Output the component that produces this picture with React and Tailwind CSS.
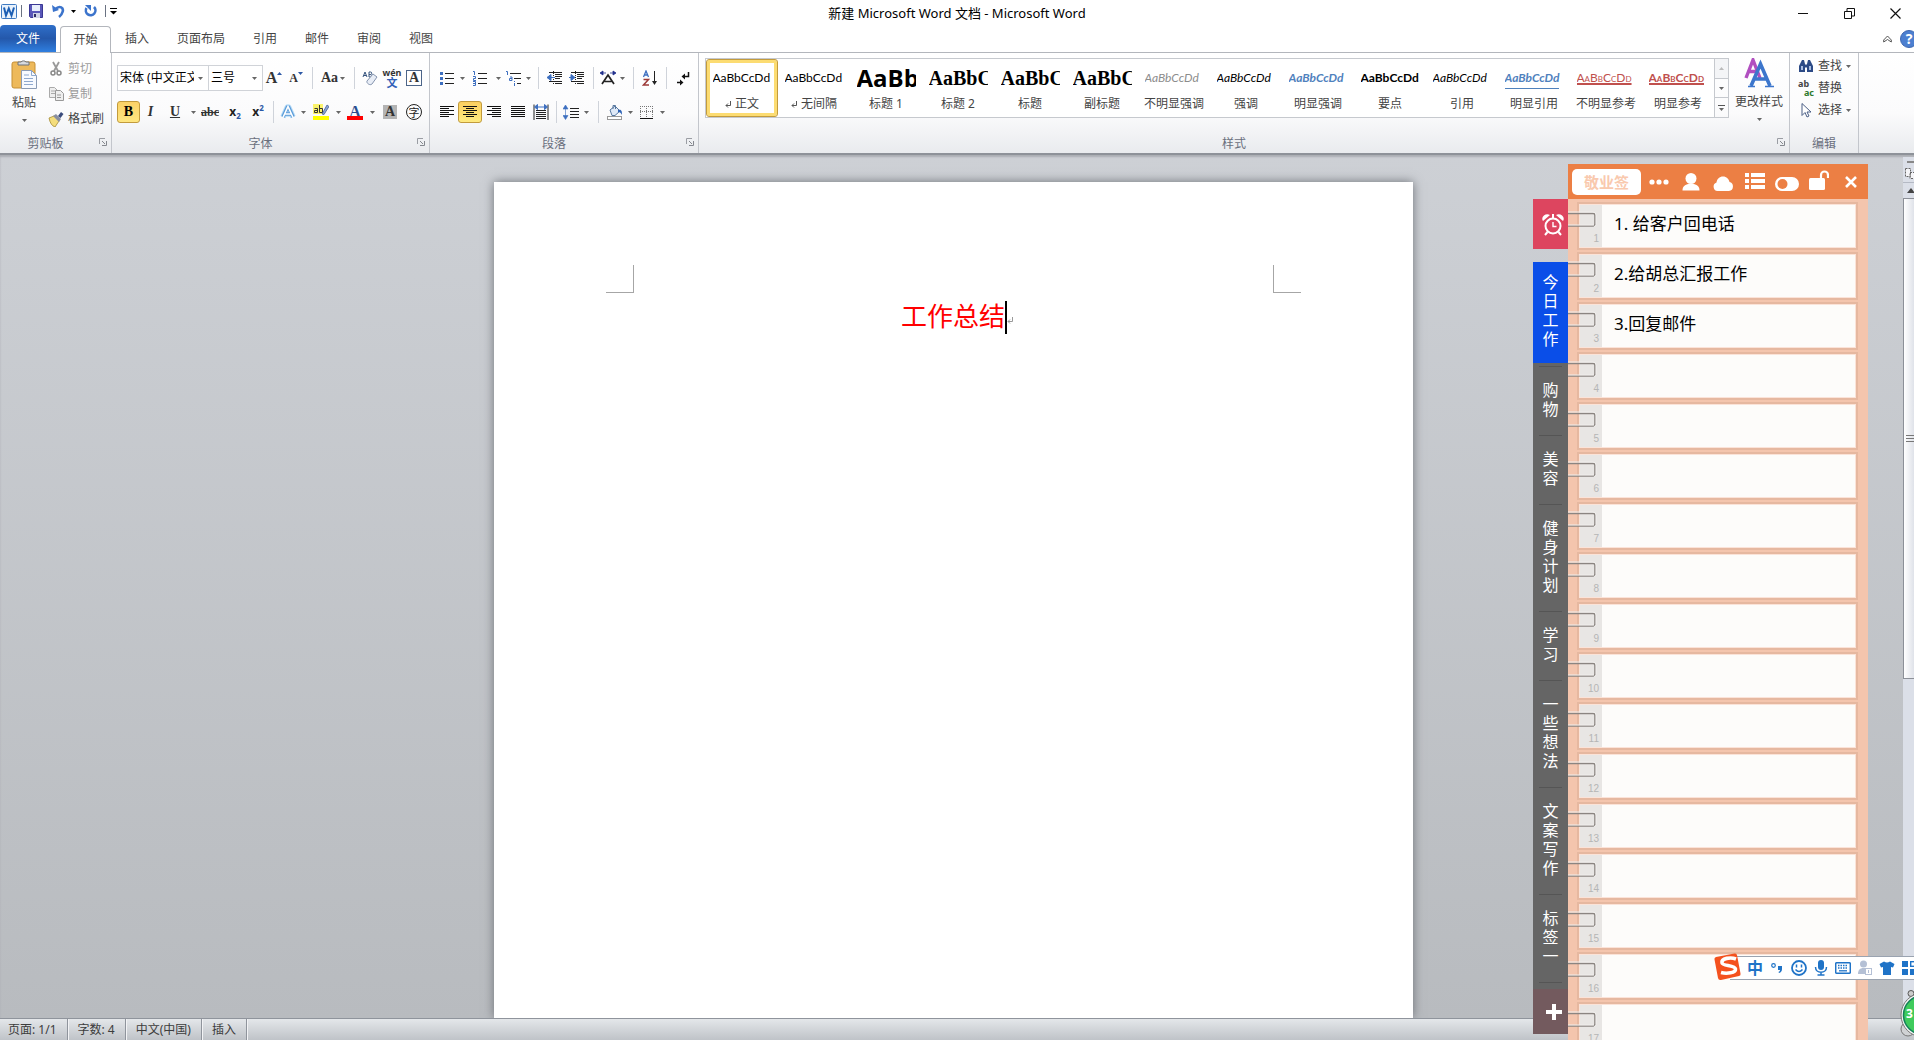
import React from "react";

const UI = "font-['Noto_Sans','Noto_Sans_CJK_SC',sans-serif]";

function Svg({ w = 16, h = 16, children, className = "" }) {
  return (
    <svg width={w} height={h} viewBox={`0 0 ${w} ${h}`} className={`shrink-0 ${className}`} aria-hidden="true">
      {children}
    </svg>
  );
}

function Arrow({ className = "text-[#666]" }) {
  return (
    <Svg w={5} h={3} className={className}>
      <path d="M0 0h5L2.500 3z" fill="currentColor" />
    </Svg>
  );
}

function Cell({ w, label, children }) {
  return (
    <button type="button" aria-label={label} className={`flex h-[22px] shrink-0 items-center justify-center ${w}`}>
      {children}
    </button>
  );
}

function Drop({ w = "w-2", label }) {
  return (
    <Cell w={w} label={label}>
      <Arrow />
    </Cell>
  );
}

function Sep({ w }) {
  return (
    <span className={`flex shrink-0 justify-center ${w}`}>
      <span className="h-[22px] w-px bg-[#cfd3da]" />
    </span>
  );
}

function Launcher() {
  return (
    <button type="button" aria-label="更多选项" className="absolute right-1 bottom-[7px]">
      <Svg w={8} h={8}>
        <path d="M.5 6V.5H6" fill="none" stroke="#9a9da3" />
        <path d="M3 3l3 3M7.500 3v4.500H3" fill="none" stroke="#85888f" />
      </Svg>
    </button>
  );
}

function Group({ title, w, pad = "", launcher = true, children }) {
  return (
    <section className={`relative flex h-full flex-col border-r border-[#c3c6cc] ${w}`}>
      <div className={`flex h-[83px] ${pad}`}>{children}</div>
      <h2 className={`text-center text-xs leading-4 text-[#6a6f7d] ${launcher ? "mr-5" : ""}`}>{title}</h2>
      {launcher && <Launcher />}
    </section>
  );
}

const serif = "font-['Liberation_Serif',serif] font-bold leading-none";

/* ---------- title bar ---------- */

function TitleBar() {
  return (
    <header className="grid h-[26px] grid-cols-[1fr_auto_1fr] items-center text-xs text-black">
      <div className="flex items-center pb-1">
        <Svg w={17} h={17}>
          <rect x="1.500" y="1.500" width="15" height="14" rx="1" fill="#e9f2fc" stroke="#3f7ac2" />
          <path d="M4 4.500l2 8 2.800-7 2.700 7 2.500-8" fill="none" stroke="#1d5fb4" strokeWidth="2" />
        </Svg>
        <span className="mx-1 h-3 w-px bg-gray-500" />
        <button type="button" aria-label="保存" className="ml-0.5">
          <Svg w={16} h={16}>
            <path d="M1.500 1.500h13v13h-12l-1-1z" fill="#5957b8" stroke="#3a3894" />
            <rect x="4" y="2" width="8" height="6" fill="#e8eefb" />
            <rect x="5" y="10" width="7" height="5" fill="#cfd3e6" />
            <rect x="6" y="11" width="2" height="3" fill="#2c2b66" />
          </Svg>
        </button>
        <button type="button" aria-label="撤消" className="flex items-center gap-1.5 pl-2">
          <Svg w={13} h={14}>
            <path d="M3 5.500C8 .500 12 4 10.500 8 10 10 9 11.500 7 13" fill="none" stroke="#3c74cc" strokeWidth="2.600" />
            <path d="M0 1l1 7 6-2z" fill="#3c74cc" />
          </Svg>
          <Arrow className="text-black" />
        </button>
        <button type="button" aria-label="恢复" className="ml-2">
          <Svg w={13} h={14}>
            <path d="M10 3a4.800 4.800 0 1 1-7.500 1" fill="none" stroke="#3c74cc" strokeWidth="2.600" />
            <path d="M1 1h6v6z" fill="#3c74cc" />
          </Svg>
        </button>
        <span className="ml-2 h-3 w-px bg-gray-500" />
        <button type="button" aria-label="自定义快速访问工具栏" className="ml-1">
          <Svg w={7} h={7}>
            <path d="M0 .500h7" stroke="#000" />
            <path d="M0 3h7L3.500 6.500z" />
          </Svg>
        </button>
      </div>
      <h1 className="text-[13px] leading-5 whitespace-pre">新建 Microsoft Word 文档 - Microsoft Word</h1>
      <div className="-mr-1 flex justify-end">
        <button type="button" aria-label="最小化" className="flex w-[46px] items-center justify-center">
          <Svg w={10} h={10}><path d="M0 5.500h10" stroke="#111" /></Svg>
        </button>
        <button type="button" aria-label="还原" className="flex w-[46px] items-center justify-center">
          <Svg w={11} h={11}>
            <path d="M.5 3.500h7v7h-7zM3 3V.500h7.500V8H8" fill="none" stroke="#111" />
          </Svg>
        </button>
        <button type="button" aria-label="关闭" className="flex w-[46px] items-center justify-center">
          <Svg w={11} h={11}><path d="M.5.500l10 10M10.500.500l-10 10" stroke="#111" strokeWidth="1.200" /></Svg>
        </button>
      </div>
    </header>
  );
}

function TabBar() {
  return (
    <nav className="flex h-[27px] items-end border-b border-[#b3b6bc] text-xs text-[#444]">
      <button type="button" className="h-[27px] w-14 rounded-t bg-linear-to-b from-[#2f6fc9] via-[#2458ab] to-[#2f7fe0] text-white">
        文件
      </button>
      <button type="button" className="-mb-px ml-1 h-[27px] w-[51px] rounded-t border border-b-0 border-[#b3b6bc] bg-white">
        开始
      </button>
      {["插入", "页面布局", "引用", "邮件", "审阅", "视图"].map((t) => (
        <button type="button" key={t} className="h-[26px] px-3.5">{t}</button>
      ))}
      <div className="-mr-1 ml-auto flex h-[26px] items-center gap-2">
        <button type="button" aria-label="折叠功能区">
          <Svg w={9} h={8}>
            <path d="M.7 5L4.500 1l3.800 4v2L4.500 4.500.7 7z" fill="#fff" stroke="#444" strokeWidth=".9" />
          </Svg>
        </button>
        <button type="button" aria-label="帮助" className="flex size-[18px] items-center justify-center rounded-full border border-[#3d68b0] bg-[#4c7fd0] text-sm font-bold leading-none text-white">
          ?
        </button>
      </div>
    </nav>
  );
}

/* ---------- ribbon ---------- */

function ClipboardGroup() {
  return (
    <Group title="剪贴板" w="w-28">
      <button type="button" className="flex w-12 shrink-0 flex-col items-center pt-1.5 text-xs text-[#444]">
        <Svg w={28} h={30}>
          <rect x="2" y="3" width="23" height="26" rx="2" fill="#edb95b" stroke="#c58f35" />
          <path d="M8 6V3h3a3 2.500 0 0 1 5 0h3v3z" fill="#d8dade" stroke="#6f7278" />
          <path d="M11.500 11.500h10l5 5v13h-15z" fill="#f7faff" stroke="#8a9bb5" />
          <path d="M21.500 11.500v5h5M14 16h5M14 19.500h9M14 22.500h9M14 25.500h9" fill="none" stroke="#8fa9cf" />
        </Svg>
        <span className="mt-1.5 mb-2 leading-4">粘贴</span>
        <Arrow />
      </button>
      <div className="flex flex-col gap-[5px] pt-1.5 text-xs leading-5 whitespace-nowrap text-[#9b9b9b]">
        <button type="button" className="flex items-center gap-1">
          <Svg>
            <path d="M5 1l5 9M11 1L6 10" stroke="#999" strokeWidth="1.800" />
            <circle cx="5" cy="12" r="2" fill="none" stroke="#888" strokeWidth="1.500" />
            <circle cx="11" cy="12" r="2" fill="none" stroke="#888" strokeWidth="1.500" />
          </Svg>
          剪切
        </button>
        <button type="button" className="flex items-center gap-1">
          <Svg>
            <path d="M1.500 1.500h5l3 3v7h-8zM3 5h4M3 7.500h4" fill="#eee" stroke="#aaa" />
            <path d="M7.500 4.500h5l3 3v7h-8zM9 9h4M9 11.500h4" fill="#eee" stroke="#999" />
          </Svg>
          复制
        </button>
        <button type="button" className="flex items-center gap-1 text-[#444]">
          <Svg>
            <path d="M1 7l5-2 5 5-4 6c-3-1-5-4-6-9z" fill="#f4dd7c" stroke="#a38a34" strokeWidth=".8" />
            <path d="M5 5l3-2 5 5-2 3z" fill="#8a8fa0" />
            <path d="M10 5l3-4 2.500 2-3 4z" fill="#3a4b7c" />
          </Svg>
          格式刷
        </button>
      </div>
    </Group>
  );
}

function Combo({ label, w, value }) {
  return (
    <label className={`relative -mr-px flex h-[26px] items-center border border-[#d0d3d8] bg-white ${w}`}>
      <select aria-label={label} className="h-full w-full appearance-none overflow-hidden pr-3.5 pl-0.5 text-xs text-black">
        <option>{value}</option>
      </select>
      <span className="pointer-events-none absolute right-[5px] flex">
        <Arrow />
      </span>
    </label>
  );
}

function FontGroup() {
  return (
    <Group title="字体" w="w-[318px]" pad="flex-col gap-2.5 pl-[5px] pt-3">
      <div className="flex items-center">
        <Combo label="字体" w="w-[92px]" value="宋体 (中文正文)" />
        <Combo label="字号" w="w-[55px]" value="三号" />
        <Cell w="w-6" label="增大字体">
          <span className={`${serif} text-base text-[#333]`}>A</span>
          <Svg w={5} h={3} className="mb-2.5"><path d="M0 3h5L2.500 0z" fill="#2b57a5" /></Svg>
        </Cell>
        <Cell w="w-5" label="缩小字体">
          <span className={`${serif} text-xs text-[#333]`}>A</span>
          <Svg w={5} h={3} className="mb-2.5"><path d="M0 0h5L2.500 3z" fill="#2b57a5" /></Svg>
        </Cell>
        <Sep w="w-3" />
        <Cell w="w-[30px]" label="更改大小写">
          <span className={`${serif} mr-0.5 text-sm text-[#333]`}>Aa</span>
          <Arrow />
        </Cell>
        <Sep w="w-3" />
        <Cell w="w-5" label="清除格式">
          <Svg>
            <path d="M1 7l2-5 2 5M1.800 5.500h2.600M7 2v5h1.500a1.300 1.300 0 0 0 0-2.500H7M8.500 4.500a1.200 1.200 0 0 0 0-2.500H7" fill="none" stroke="#36547e" />
            <path d="M5 11l6-7 4 3-5 7c-2 2-6-1-5-3z" fill="#e8edf6" stroke="#8594ae" />
          </Svg>
        </Cell>
        <Cell w="w-6" label="拼音指南">
          <span className="flex flex-col items-center">
            <span className="text-[9px] leading-[9px] font-bold text-[#333]">wén</span>
            <span className="text-[11px] leading-[11px] font-bold text-[#3160b8]">文</span>
          </span>
        </Cell>
        <Cell w="w-5" label="字符边框">
          <span className={`${serif} flex size-4 items-center justify-center border border-[#4c6488] bg-white text-sm text-[#333]`}>A</span>
        </Cell>
      </div>
      <div className="flex items-center">
        <button type="button" aria-label="加粗" aria-pressed="true" className={`${serif} h-[22px] w-[23px] shrink-0 rounded-[3px] border border-[#c29b3d] bg-linear-to-b from-[#fbd267] to-[#fee680] text-sm text-black`}>
          B
        </button>
        <Cell w="w-[21px]" label="倾斜"><span className={`${serif} text-sm text-[#333] italic`}>I</span></Cell>
        <Cell w="w-7" label="下划线"><span className={`${serif} text-sm text-[#333] underline`}>U</span></Cell>
        <Drop label="下划线样式" />
        <Cell w="w-[26px]" label="删除线"><span className="font-['Liberation_Serif',serif] text-xs leading-none font-bold text-[#333] line-through">abc</span></Cell>
        <Cell w="w-6" label="下标">
          <span className="text-xs leading-none font-bold text-[#222]">x</span>
          <span className="mt-2 text-[8px] leading-none font-bold text-[#2b57a5]">2</span>
        </Cell>
        <Cell w="w-[22px]" label="上标">
          <span className="text-xs leading-none font-bold text-[#222]">x</span>
          <span className="mb-2 text-[8px] leading-none font-bold text-[#2b57a5]">2</span>
        </Cell>
        <Sep w="w-2" />
        <Cell w="w-[22px]" label="文本效果">
          <Svg>
            <path d="M3 13L7.500 3h1L13 13M5 10h6" fill="none" stroke="#b5dbf7" strokeWidth="5.500" strokeLinejoin="round" />
            <path d="M3 13L7.500 3h1L13 13M5 10h6" fill="none" stroke="#5b9bd8" strokeWidth="3.600" strokeLinejoin="round" />
            <path d="M3 13.500L8 2.500l5 11M5 10h6" fill="none" stroke="#fff" strokeWidth="1.600" />
          </Svg>
        </Cell>
        <Drop label="文本效果选项" />
        <Cell w="w-[27px]" label="突出显示">
          <Svg>
            <rect width="10" height="10" fill="#fbf36b" />
            <rect y="12" width="16" height="4" fill="#ff0" />
            <path d="M1.500 4.500h3v4h-3v-2h3M6.500 1v7.500h3v-4h-3" fill="none" stroke="#333" />
            <path d="M9 10l5-9 2 1.500-5 8z" fill="#8aa5d8" stroke="#3a5384" strokeWidth=".7" />
          </Svg>
        </Cell>
        <Drop label="突出显示颜色" />
        <Cell w="w-[26px]" label="字体颜色">
          <span className="flex flex-col items-center">
            <span className={`${serif} h-3 text-base leading-3 text-[#2b4f91]`}>A</span>
            <span className="h-1 w-4 bg-[#f00]" />
          </span>
        </Cell>
        <Drop label="选择字体颜色" />
        <Cell w="w-7" label="字符底纹">
          <span className={`${serif} flex size-[14px] items-center justify-center bg-[#b4b4b4] text-sm text-[#333]`}>A</span>
        </Cell>
        <Cell w="w-5" label="带圈字符">
          <span className="flex size-4 items-center justify-center rounded-full border border-[#222] text-[11px] leading-none text-[#222]">字</span>
        </Cell>
      </div>
    </Group>
  );
}

function Lines({ kind }) {
  const d = {
    left: "M1 2.500h14M1 4.500h9M1 6.500h14M1 8.500h9M1 10.500h14M1 12.500h9",
    center: "M1 2.500h14M4 4.500h8M1 6.500h14M4 8.500h8M1 10.500h14M4 12.500h8",
    right: "M1 2.500h14M6 4.500h9M1 6.500h14M6 8.500h9M1 10.500h14M6 12.500h9",
    full: "M1 2.500h14M1 4.500h14M1 6.500h14M1 8.500h14M1 10.500h14M1 12.500h14",
  }[kind];
  return <Svg><path d={d} stroke="#111" /></Svg>;
}

function ParagraphGroup() {
  return (
    <Group title="段落" w="w-[269px]" pad="flex-col gap-3 pl-1.5 pt-3.5">
      <div className="flex items-center">
        <Cell w="w-[22px]" label="项目符号">
          <Svg>
            <path d="M6 3.500h9M6 8.500h9M6 13.500h9" stroke="#222" />
            <path d="M1 2h3v3H1zM1 7h3v3H1zM1 12h3v3H1z" fill="#3d6fc0" />
          </Svg>
        </Cell>
        <Drop label="项目符号库" />
        <Cell w="w-7" label="编号">
          <Svg>
            <path d="M6 3.500h9M6 8.500h9M6 13.500h9" stroke="#222" />
            <path d="M1 1.500h1.500V5M1 6.500h2.500v2H1.500v2H4M1 11.500h2.500v4H1M1 13.500h2" fill="none" stroke="#3d6fc0" />
          </Svg>
        </Cell>
        <Drop label="编号库" />
        <Cell w="w-[22px]" label="多级列表">
          <Svg>
            <path d="M5 3.500h11M9 8.500h7M12 13.500h4" stroke="#222" />
            <path d="M1 1.500h1.500V5M5 7h2v3.500H4.500v-2H7M9.500 11v1M9.500 13v3" fill="none" stroke="#3d6fc0" />
          </Svg>
        </Cell>
        <Drop label="列表库" />
        <Sep w="w-3" />
        <Cell w="w-[22px]" label="减少缩进量">
          <Svg>
            <path d="M2 2.500h13M8 4.500h7M8 6.500h7M8 8.500h5M2 11.500h13M8 13.500h7" stroke="#222" />
            <path d="M6.500 1v14" stroke="#222" strokeDasharray="1 1" />
            <path d="M0 7.500l4-3v6zM4 7.500h4" fill="#3d6fc0" stroke="#3d6fc0" />
          </Svg>
        </Cell>
        <Cell w="w-[22px]" label="增加缩进量">
          <Svg>
            <path d="M2 2.500h13M8 4.500h7M8 6.500h7M8 8.500h5M2 11.500h13M8 13.500h7" stroke="#222" />
            <path d="M6.500 1v14" stroke="#222" strokeDasharray="1 1" />
            <path d="M6 7.500l-4-3v6zM0 7.500h3" fill="#3d6fc0" stroke="#3d6fc0" />
          </Svg>
        </Cell>
        <Sep w="w-2.5" />
        <Cell w="w-5" label="中文版式">
          <Svg>
            <path d="M2 14l6-9 6 9M4.500 11.500h7" fill="none" stroke="#222" strokeWidth="1.700" />
            <path d="M0 3l3-2v4zM3 3h3M16 3l-3-2v4zM13 3h-3" fill="#1e2d8c" stroke="#1e2d8c" strokeWidth=".8" />
          </Svg>
        </Cell>
        <Drop label="中文版式选项" />
        <Sep w="w-3.5" />
        <Cell w="w-5" label="排序">
          <Svg>
            <path d="M1.500 7l2.500-6 2.500 6M2.500 5h3" fill="none" stroke="#3d6fc0" strokeWidth="1.300" />
            <path d="M1.500 9.500h5l-5 5.500h5.500" fill="none" stroke="#9c3a38" strokeWidth="1.500" />
            <path d="M12.500 1v12" stroke="#222" />
            <path d="M10 11h5l-2.500 4z" fill="#222" />
          </Svg>
        </Cell>
        <Sep w="w-3" />
        <Cell w="w-[22px]" label="显示编辑标记">
          <Svg>
            <path d="M13.500 2v4.500H9M2 12.500h4" fill="none" stroke="#111" strokeWidth="1.500" />
            <path d="M10 3.500v6l-3.500-3zM5 9.500v6l3.500-3z" fill="#111" />
          </Svg>
        </Cell>
      </div>
      <div className="flex items-center">
        <Cell w="w-[22px]" label="左对齐"><Lines kind="left" /></Cell>
        <button type="button" aria-label="居中" aria-pressed="true" className="flex h-[22px] w-6 shrink-0 items-center justify-center rounded-[3px] border border-[#c29b3d] bg-linear-to-b from-[#fbcf60] to-[#feea80]">
          <Lines kind="center" />
        </button>
        <Cell w="w-6" label="右对齐"><Lines kind="right" /></Cell>
        <Cell w="w-6" label="两端对齐"><Lines kind="full" /></Cell>
        <Cell w="w-[22px]" label="分散对齐">
          <Svg>
            <path d="M3 6.500h10M3 8.500h10M3 10.500h10M3 12.500h10M3 14.500h10M1 .5v15.500M15 .5V16" stroke="#222" />
            <path d="M1.500 3l3-2.500v5zM14.500 3l-3-2.500v5zM4 3h8" fill="#3d6fc0" stroke="#3d6fc0" />
          </Svg>
        </Cell>
        <Sep w="w-2" />
        <Cell w="w-[22px]" label="行距">
          <Svg>
            <path d="M7 4.500h9M7 7.500h9M7 10.500h9M7 13.500h9" stroke="#222" />
            <path d="M0 5l2.500-4L5 5zM0 11.500l2.500 4 2.500-4zM2.500 4v9" fill="#3d6fc0" stroke="#3d6fc0" strokeWidth=".6" />
          </Svg>
        </Cell>
        <Drop label="行距选项" />
        <Sep w="w-4" />
        <Cell w="w-[18px]" label="底纹">
          <Svg>
            <path d="M3 6l5-4 5 5-5 4.500H5z" fill="#dfe9f7" stroke="#56779f" />
            <path d="M6 5V1.500h2.500V5" fill="none" stroke="#56779f" />
            <path d="M11 6c4-1 4 2 4 5-1-2-2-3-4-3z" fill="#2d62b5" />
            <rect x=".5" y="12.500" width="14" height="3" fill="#fff" stroke="#999" />
          </Svg>
        </Cell>
        <Drop w="w-3" label="底纹颜色" />
        <Cell w="w-[22px]" label="边框">
          <Svg>
            <path d="M1.500 2v12M7.500 2v12M13.500 2v12M1 2.500h13M1 7.500h13" stroke="#777" strokeDasharray="1 1" />
            <path d="M1 14.500h13" stroke="#111" />
          </Svg>
        </Cell>
        <Drop label="边框选项" />
      </div>
    </Group>
  );
}

const body = "font-['Lato',sans-serif] text-xs";
const heading = "font-['Liberation_Serif',serif] text-xl font-bold";
const styleList = [
  { name: "正文", mark: true, cls: body, on: true },
  { name: "无间隔", mark: true, cls: body },
  { name: "标题 1", cls: "font-['Open_Sans',sans-serif] text-2xl font-bold", sample: "AaBb" },
  { name: "标题 2", cls: heading, sample: "AaBbC" },
  { name: "标题", cls: heading, sample: "AaBbC" },
  { name: "副标题", cls: heading, sample: "AaBbC" },
  { name: "不明显强调", cls: `${body} italic text-[#8c8c8c]` },
  { name: "强调", cls: `${body} italic` },
  { name: "明显强调", cls: `${body} font-bold text-[#4f81bd] italic` },
  { name: "要点", cls: `${body} font-bold` },
  { name: "引用", cls: `${body} italic` },
  { name: "明显引用", cls: `${body} border-b border-[#4f81bd] font-bold text-[#4f81bd] italic` },
  { name: "不明显参考", cls: `${body} text-[#c0504d] underline decoration-2 [font-variant:small-caps]` },
  { name: "明显参考", cls: `${body} font-bold text-[#c0504d] underline decoration-2 [font-variant:small-caps]` },
];

function ReturnMark({ className = "text-[#555]" }) {
  return (
    <Svg w={6} h={7} className={className}>
      <path d="M5.500 0v4.500H1M3 2.500l-2 2 2 2" fill="none" stroke="currentColor" />
    </Svg>
  );
}

function StylesGroup() {
  return (
    <Group title="样式" w="min-w-0 flex-1" pad="pl-1.5 pt-[5px]">
      <div className="grid h-[60px] min-w-0 flex-1 auto-cols-fr grid-flow-col border border-[#c6c9ce] bg-white text-black">
        {styleList.map((s) => (
          <button
            type="button"
            key={s.name}
            className={`flex min-w-0 flex-col items-center ${s.on ? "rounded-[3px] border border-[#c29b3d] shadow-[inset_0_0_0_3px_#fcdc72]" : "border border-transparent"}`}
          >
            <span className="mt-1 flex h-7 w-[59px] items-center overflow-hidden">
              <span className={`leading-5 whitespace-nowrap ${s.cls}`}>{s.sample || "AaBbCcDd"}</span>
            </span>
            <span className="mt-0.5 flex items-center gap-1 text-xs leading-5 whitespace-nowrap text-[#444]">
              {s.mark && <ReturnMark />}
              {s.name}
            </span>
          </button>
        ))}
      </div>
      <div className="flex h-[60px] w-3.5 flex-col border border-l-0 border-[#c6c9ce]">
        <button type="button" aria-label="上一行" className="flex flex-1 items-center justify-center bg-[#f4f5f7]">
          <Svg w={5} h={3}><path d="M0 3h5L2.500 0z" fill="#bbb" /></Svg>
        </button>
        <button type="button" aria-label="下一行" className="flex flex-1 items-center justify-center border-y border-[#c6c9ce]"><Arrow /></button>
        <button type="button" aria-label="其他" className="flex flex-1 flex-col items-center justify-center gap-0.5">
          <span className="h-px w-[7px] bg-[#555]" />
          <Arrow />
        </button>
      </div>
      <button type="button" className="flex w-[60px] flex-col items-center text-xs text-[#444]">
        <Svg w={30} h={32}>
          <path d="M2 20L9 2l7 18M5 13.500h8" fill="none" stroke="#b14fc0" strokeWidth="3.400" />
          <path d="M7 28L16.500 6 26 28M11 21h11" fill="none" stroke="#3c76cc" strokeWidth="3.600" />
          <path d="M4 28.500h7M21 28.500h9" stroke="#3c76cc" strokeWidth="1.600" />
        </Svg>
        <span className="mb-1 leading-6 whitespace-nowrap">更改样式</span>
        <Arrow />
      </button>
    </Group>
  );
}

function EditGroup() {
  return (
    <Group title="编辑" w="w-[69px]" pad="flex-col gap-0.5 pl-2 pt-[3px] text-xs leading-5 text-[#444]" launcher={false}>
      <button type="button" className="flex items-center gap-1">
        <Svg>
          <path d="M2 6l2-4h2l1 4v8H1V8zM9 6l1-4h2l2 4 1 2v6H9z" fill="#2c4a86" />
          <path d="M3 8h2v4H3zM11 8h2v4h-2z" fill="#a9bde2" />
          <path d="M6.500 6.500h3v3h-3z" fill="#2c4a86" />
        </Svg>
        查找<Arrow />
      </button>
      <button type="button" className="flex items-center gap-1">
        <span className="flex w-4 flex-col text-[9px] leading-[9px] font-bold text-[#444]">
          <span className="text-left">ab</span>
          <span className="text-right text-[#2d7a2d]">ac</span>
        </span>
        替换
      </button>
      <button type="button" className="flex items-center gap-1">
        <Svg>
          <path d="M4 1.500v12l3-3 2 4.500 2-1-2-4h4z" fill="#fff" stroke="#4b5f86" />
        </Svg>
        选择<Arrow />
      </button>
    </Group>
  );
}

/* ---------- document ---------- */

function Workspace() {
  return (
    <main className="flex min-h-0 flex-1 bg-linear-to-b from-[#cdd0d5] to-[#b8bbbf] shadow-[inset_0_2px_2px_#aaadb3]">
      <div className="flex min-w-0 flex-1 justify-center pt-[27px] pl-[3px]">
        <article className="w-[919px] bg-white px-28 pt-[83px] shadow-[0_0_10px_#6c7076]">
          <div className="flex justify-between">
            <span className="h-7 w-7 border-r border-b border-[#a6a6a6]" />
            <span className="h-7 w-7 border-b border-l border-[#a6a6a6]" />
          </div>
          <p className="mt-2 flex items-start justify-center font-['Noto_Sans_CJK_SC',sans-serif] text-[26px] leading-7 text-[#f00]">
            工作总结
            <span className="h-[33px] w-0.5 bg-black" />
            <ReturnMark className="mt-4 -mr-2 text-[#999]" />
          </p>
        </article>
      </div>
      <aside className="mt-0.5 flex w-[11px] flex-col overflow-hidden bg-[#dbdfe8]">
        <span className="mt-1 ml-1 h-0.5 w-2 bg-[#888]" />
        <button type="button" aria-label="标尺" className="mt-1 ml-0.5">
          <Svg w={12} h={13}>
            <path d="M.5 1.500h5v8h-5zM5 5.500h9v6H5z" fill="#f5f5f8" stroke="#666" strokeDasharray="2 1" />
          </Svg>
        </button>
        <button type="button" aria-label="向上滚动" className="mt-0.5 flex h-4 items-center border-t border-[#b4b9c4] pl-1">
          <Svg w={8} h={5}><path d="M0 5l4-5 4 5z" fill="#444" /></Svg>
        </button>
        <div className="flex flex-[480] flex-col items-end justify-center gap-0.5 border border-r-0 border-[#8c9098] bg-linear-to-r from-white to-[#dfe2e9]">
          <span className="h-px w-2 bg-[#777]" />
          <span className="h-px w-2 bg-[#777]" />
          <span className="h-px w-2 bg-[#777]" />
        </div>
        <div className="flex-[340]" />
      </aside>
    </main>
  );
}

function StatusBar() {
  return (
    <footer className="flex h-[22px] shrink-0 items-center border-t border-[#8f949c] bg-linear-to-b from-[#e4e7ea] to-[#bfc3c8] text-xs text-[#3c3c3c]">
      {["页面: 1/1", "字数: 4", "中文(中国)", "插入"].map((t) => (
        <span key={t} className="flex h-full items-center border-r border-[#8f949c] px-2.5 shadow-[1px_0_0_#f2f3f5] first:pl-2">
          {t}
        </span>
      ))}
    </footer>
  );
}

/* ---------- sticky notes panel ---------- */

const notes = ["1. 给客户回电话", "2.给胡总汇报工作", "3.回复邮件", ...Array(14).fill("")];
const categories = ["购物", "美容", "健身计划", "学习", "一些想法", "文案写作", "标签一"];

function NoteIcon({ label, children }) {
  return (
    <button type="button" aria-label={label} className="flex w-8 items-center justify-center text-white">
      {children}
    </button>
  );
}

function NoteRow({ n, text }) {
  return (
    <li className="relative flex h-[50px] shrink-0 items-start pt-[5px] pr-3 pl-[11px]">
      <div className="flex h-11 min-w-0 flex-1 border border-[#fbe3d8] bg-[#fdfcfa] shadow-[0_0_0_2px_#e6b8a0]">
        <label htmlFor={`note-${n}`} className="flex w-[22px] shrink-0 items-end justify-end bg-[#e8e6e4] pr-[3px] pb-0.5 font-['Liberation_Sans',sans-serif] text-[10px] leading-3 text-[#b5b5b5]">
          {n}
        </label>
        <input id={`note-${n}`} defaultValue={text} className="mt-[3px] h-7 min-w-0 flex-1 bg-transparent pl-3 text-[17px] text-black outline-none" />
      </div>
      <svg width="30" height="19" viewBox="0 0 30 19" className="absolute top-3 left-0" aria-hidden="true">
        <path d="M0 2.500h25q2 0 2 2v8.500q0 2-2 2H0" fill="none" stroke="#8b8581" strokeWidth="1.600" />
        <path d="M0 1h25q3 0 3 3v9.500q0 2-2 2M0 14h26" fill="none" stroke="#f1efed" />
      </svg>
    </li>
  );
}

function NotesPanel() {
  return (
    <div className="absolute top-[164px] right-[46px] bottom-0 flex">
      <div className="flex w-[35px] flex-col pt-[35px] text-base leading-[19px] text-white">
        <button type="button" aria-label="提醒" className="mb-[13px] flex h-[50px] shrink-0 items-center justify-center bg-[#dd455f] pl-1">
          <Svg w={22} h={23}>
            <circle cx="11" cy="13" r="7.500" fill="none" stroke="#fff" strokeWidth="2" />
            <path d="M11 9v4.500h3.500" fill="none" stroke="#fff" strokeWidth="1.400" />
            <path d="M1 8a5 4.500 0 0 1 7-6zM21 8a5 4.500 0 0 0-7-6zM10 1h2v4h-2z" fill="#fff" />
            <path d="M5.500 19L3 22M16.500 19l2.500 3" stroke="#fff" strokeWidth="2" />
          </Svg>
        </button>
        <button type="button" className="h-[101px] shrink-0 bg-[#0a4ee8] px-[9px] pb-1 break-all">今日工作</button>
        <div className="flex flex-col bg-[#656565] pt-[3px]">
          {categories.map((c) => (
            <button type="button" key={c} className="mx-1.5 border-t border-[#555] px-[3px] pt-3.5 pb-4 break-all">
              {c}
            </button>
          ))}
          <span className="mx-1.5 h-[7px] border-t border-[#555]" />
        </div>
        <button type="button" aria-label="添加分类" className="flex h-[45px] shrink-0 items-center justify-center bg-[#735a5e] pl-1.5">
          <Svg><path d="M8 0v16M0 8h16" stroke="#fff" strokeWidth="4" /></Svg>
        </button>
      </div>
      <section className="flex w-[300px] flex-col bg-[#f4c5ad]">
        <header className="flex h-[35px] shrink-0 items-center bg-[#ec7f44] pl-1">
          <span className="mr-0.5 flex h-[26px] w-[69px] items-center justify-center rounded-[5px] bg-white pt-0.5 text-[15px] leading-none font-bold text-[#f9c9ae]">
            敬业签
          </span>
          <NoteIcon label="更多">
            <Svg w={20} h={6}>
              <circle cx="3" cy="3" r="2.600" fill="#fff" /><circle cx="10" cy="3" r="2.600" fill="#fff" /><circle cx="17" cy="3" r="2.600" fill="#fff" />
            </Svg>
          </NoteIcon>
          <NoteIcon label="用户">
            <Svg w={18} h={18}>
              <circle cx="9" cy="5.500" r="5.500" fill="#fff" />
              <path d="M.5 17.500c0-4 2.500-6 6-6.500h5c3.500.5 6 2.500 6 6.500z" fill="#fff" />
            </Svg>
          </NoteIcon>
          <NoteIcon label="云同步">
            <Svg w={20} h={15} className="mt-1">
              <path d="M4.500 15a4.400 4.400 0 0 1-1-8.500C4 3 6.500.5 10 .5s6 2.500 6.500 5.500A4.600 4.600 0 0 1 16 15z" fill="#fff" />
            </Svg>
          </NoteIcon>
          <NoteIcon label="列表">
            <Svg w={20} h={16} className="mb-0.5">
              <path d="M0 0h4v4H0zM6 0h14v4H6zM0 6h4v4H0zM6 6h14v4H6zM0 12h4v4H0zM6 12h14v4H6z" fill="#fff" />
            </Svg>
          </NoteIcon>
          <NoteIcon label="开关">
            <Svg w={24} h={14} className="mt-1">
              <rect width="24" height="14" rx="7" fill="#fff" /><circle cx="7.500" cy="7" r="5" fill="#ec7f44" />
            </Svg>
          </NoteIcon>
          <NoteIcon label="解锁">
            <Svg w={20} h={20} className="mb-1">
              <rect y="8" width="16" height="12" rx="1.500" fill="#fff" />
              <path d="M12 9V5a3.500 3.500 0 0 1 7 0v3" fill="none" stroke="#fff" strokeWidth="2.200" />
            </Svg>
          </NoteIcon>
          <NoteIcon label="关闭">
            <Svg w={12} h={12}><path d="M1 1l10 10M11 1L1 11" stroke="#fff" strokeWidth="2.600" /></Svg>
          </NoteIcon>
        </header>
        <ol className="flex min-h-0 flex-1 flex-col overflow-hidden">
          {notes.map((t, i) => (
            <NoteRow key={i} n={i + 1} text={t} />
          ))}
        </ol>
      </section>
    </div>
  );
}

/* ---------- input method bar and floating ball ---------- */

function ImeBar() {
  const cell = "flex w-[22px] shrink-0 items-center justify-center text-[#1f73c7]";
  return (
    <div className="absolute right-0 bottom-[60px] flex h-6 w-[184px] items-center overflow-visible border-y border-[#9aa3b0] bg-white pl-3.5">
      <svg width="30" height="30" viewBox="0 0 30 30" className="absolute -top-[5px] -left-[17px]" aria-hidden="true">
        <path d="M3 5q-2 .5-1.500 2.500L5 26q.5 2.500 3 2l18-4q2-.5 1.500-2.500L24 3q-.5-2-2.500-1.500z" fill="#f4511e" />
        <path d="M23 7c-5-2-15-1-14 4 .6 3 13 2 13.500 6 .4 4-9 5-14.500 3.500" fill="none" stroke="#fff" strokeWidth="3.600" />
      </svg>
      <button type="button" aria-label="中文输入" className={cell}>
        <span className="text-base leading-none font-bold">中</span>
      </button>
      <button type="button" aria-label="中文标点" className={cell}>
        <Svg w={12} h={12}>
          <circle cx="2.500" cy="3.500" r="1.800" fill="none" stroke="currentColor" strokeWidth="1.200" />
          <path d="M7 4h4v3c0 2-1 3.500-3 4l-.5-1c1-.5 1.500-1 1.500-2H7z" fill="currentColor" />
        </Svg>
      </button>
      <button type="button" aria-label="表情" className={cell}>
        <Svg>
          <circle cx="8" cy="8" r="7" fill="none" stroke="currentColor" strokeWidth="1.800" />
          <path d="M5.500 4.500v3M10.500 4.500v3M4.500 9.500q3.500 4 7 0" fill="none" stroke="currentColor" strokeWidth="1.500" />
        </Svg>
      </button>
      <button type="button" aria-label="语音" className={cell}>
        <Svg>
          <rect x="5" y="0" width="6" height="10" rx="3" fill="currentColor" />
          <path d="M2.500 7c0 7 11 7 11 0M8 12v3M4.500 15h7" fill="none" stroke="currentColor" strokeWidth="1.500" />
        </Svg>
      </button>
      <button type="button" aria-label="软键盘" className={cell}>
        <Svg>
          <rect x=".7" y="2.700" width="14.600" height="10.600" rx="1" fill="none" stroke="currentColor" strokeWidth="1.500" />
          <path d="M3 5.500h10M3 8h10" stroke="currentColor" strokeWidth="1.500" strokeDasharray="1.500 1" />
          <path d="M4 10.800h8" stroke="currentColor" strokeWidth="1.300" />
        </Svg>
      </button>
      <button type="button" aria-label="账号" className={cell}>
        <Svg>
          <circle cx="6.500" cy="4" r="3.500" fill="#b4c0d5" />
          <path d="M1 14c0-4 2-6 5.500-6S12 10 12 14z" fill="#b4c0d5" />
          <rect x="8.500" y="8.500" width="6" height="6" fill="#fff" stroke="#b4c0d5" />
          <path d="M11.500 10v3" stroke="#b4c0d5" />
        </Svg>
      </button>
      <button type="button" aria-label="皮肤" className={cell}>
        <Svg><path d="M5 1.500q3 2 6 0L15.500 4 14 7.500l-2-.5v8H4V7l-2 .5L.5 4z" fill="currentColor" /></Svg>
      </button>
      <button type="button" aria-label="工具箱" className={cell}>
        <Svg w={14} h={14}>
          <path d="M0 0h6v6H0zM0 8h6v6H0zM8 8h6v6H8z" fill="currentColor" />
          <rect x="8.700" y=".7" width="4.600" height="4.600" fill="none" stroke="currentColor" strokeWidth="1.400" />
        </Svg>
      </button>
    </div>
  );
}

function Ball() {
  return (
    <div className="absolute right-0 bottom-0 h-[50px] w-[14px] overflow-hidden">
      <svg width="14" height="50" viewBox="0 0 14 50" aria-hidden="true">
        <circle cx="11" cy="3.500" r="3" fill="#ccc" stroke="#555" />
        <circle cx="8" cy="39" r="7" fill="#d0d2d4" stroke="#777" />
        <circle cx="23" cy="25" r="22" fill="#f3f3f3" stroke="#777" />
        <circle cx="23" cy="25" r="19.500" fill="#3fcb5c" stroke="#14805a" strokeWidth="1.500" />
      </svg>
      <span className="absolute top-4 left-1.5 text-xs leading-4 font-bold text-white">3</span>
    </div>
  );
}

export default function App() {
  return (
    <div className={`relative flex h-screen w-full flex-col overflow-hidden bg-white ${UI}`}>
      <TitleBar />
      <TabBar />
      <div className="flex h-[102px] shrink-0 border-b-2 border-[#8e9299] bg-linear-to-b from-white via-[#fbfbfc] via-60% to-[#e9ebee]">
        <ClipboardGroup />
        <FontGroup />
        <ParagraphGroup />
        <StylesGroup />
        <EditGroup />
        <div className="w-[55px]" />
      </div>
      <Workspace />
      <StatusBar />
      <NotesPanel />
      <ImeBar />
      <Ball />
    </div>
  );
}
